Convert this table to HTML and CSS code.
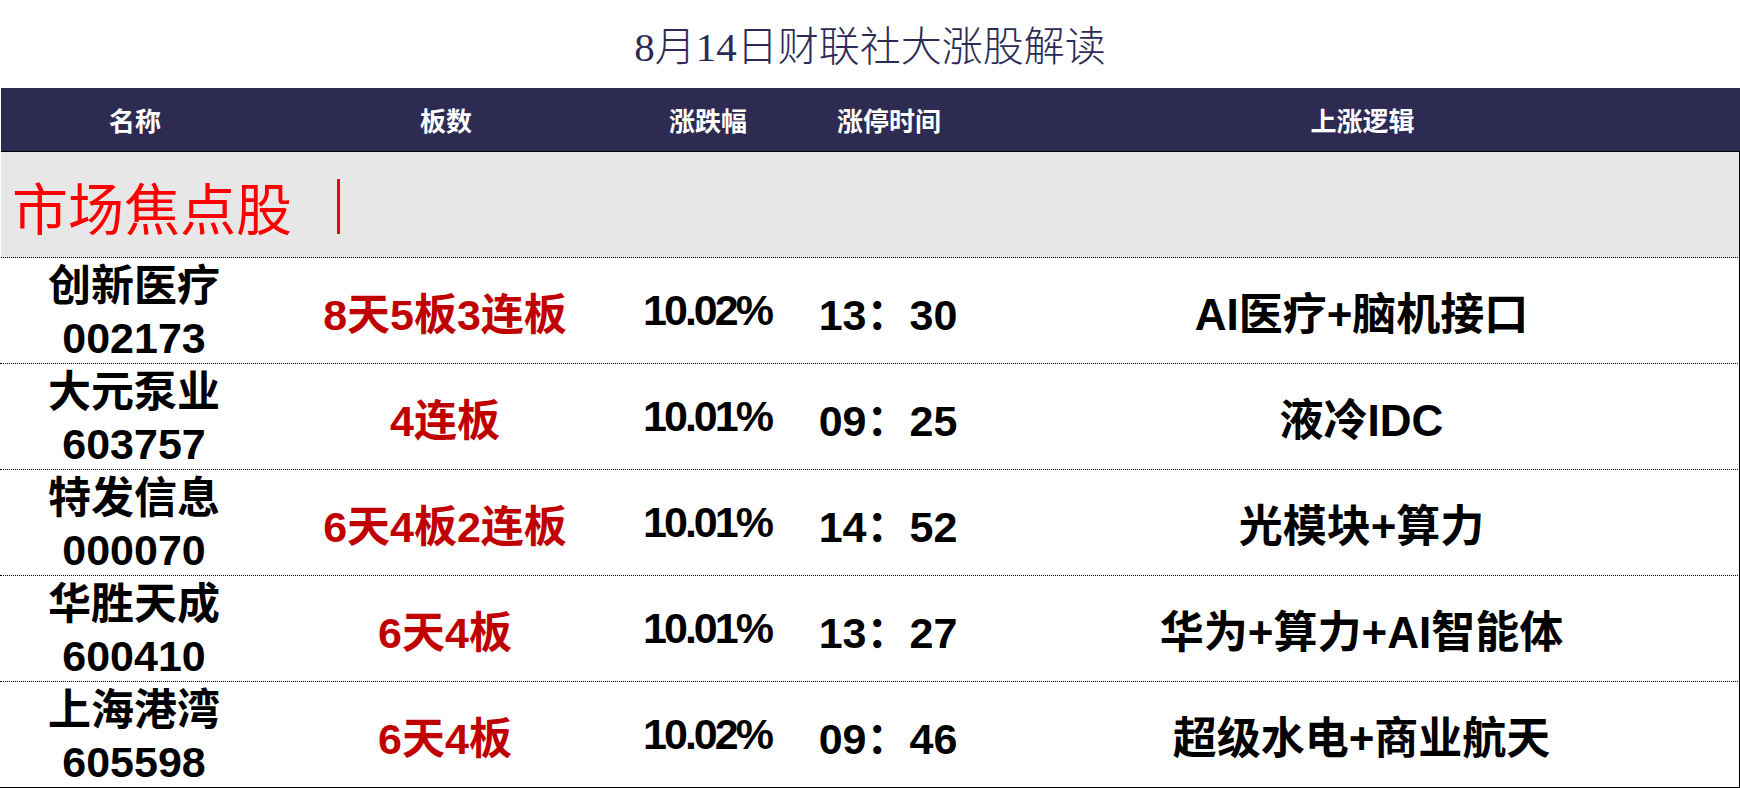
FILE: index.html
```html
<!DOCTYPE html>
<html lang="zh-CN">
<head>
<meta charset="utf-8">
<title>8月14日财联社大涨股解读</title>
<link rel="stylesheet" href="styles.css">
</head>
<body>
<div class="page">
  <h1 class="title">8月14日财联社大涨股解读</h1>
  <div class="table">
    <div class="head">
      <div class="c c1">名称</div>
      <div class="c c2">板数</div>
      <div class="c c3">涨跌幅</div>
      <div class="c c4">涨停时间</div>
      <div class="c c5">上涨逻辑</div>
    </div>
    <div class="section">
      <span class="section-text">市场焦点股</span><span class="section-bar"></span>
    </div>
    <div class="row">
      <div class="c c1 name"><span class="stock">创新医疗</span><span class="code">002173</span></div>
      <div class="c c2 board">8天5板3连板</div>
      <div class="c c3 pct">10.02%</div>
      <div class="c c4 time">13：30</div>
      <div class="c c5 logic">AI医疗+脑机接口</div>
    </div>
    <div class="row">
      <div class="c c1 name"><span class="stock">大元泵业</span><span class="code">603757</span></div>
      <div class="c c2 board">4连板</div>
      <div class="c c3 pct">10.01%</div>
      <div class="c c4 time">09：25</div>
      <div class="c c5 logic">液冷IDC</div>
    </div>
    <div class="row">
      <div class="c c1 name"><span class="stock">特发信息</span><span class="code">000070</span></div>
      <div class="c c2 board">6天4板2连板</div>
      <div class="c c3 pct">10.01%</div>
      <div class="c c4 time">14：52</div>
      <div class="c c5 logic">光模块+算力</div>
    </div>
    <div class="row">
      <div class="c c1 name"><span class="stock">华胜天成</span><span class="code">600410</span></div>
      <div class="c c2 board">6天4板</div>
      <div class="c c3 pct">10.01%</div>
      <div class="c c4 time">13：27</div>
      <div class="c c5 logic">华为+算力+AI智能体</div>
    </div>
    <div class="row last">
      <div class="c c1 name"><span class="stock">上海港湾</span><span class="code">605598</span></div>
      <div class="c c2 board">6天4板</div>
      <div class="c c3 pct">10.02%</div>
      <div class="c c4 time">09：46</div>
      <div class="c c5 logic">超级水电+商业航天</div>
    </div>
  </div>
</div>
</body>
</html>
```
FILE: styles.css
```css
html, body {
  margin: 0;
  padding: 0;
  background: #ffffff;
}
.page {
  width: 1740px;
  height: 788px;
  overflow: hidden;
  font-family: "Liberation Sans", "Noto Sans CJK SC", sans-serif;
}
.title {
  margin: 0;
  height: 88px;
  display: flex;
  align-items: center;
  justify-content: center;
  font-family: "Liberation Serif", "Noto Sans CJK SC", serif;
  font-weight: 300;
  font-size: 41px;
  color: #2d2b55;
  box-sizing: border-box;
  padding-bottom: 2px;
}
.table {
  display: flex;
  flex-direction: column;
}
.head, .row {
  display: grid;
  grid-template-columns: 268px 354px 170px 192px 1fr;
  align-items: center;
}
.head {
  height: 63px;
  background: #2d2b52;
  border-bottom: 1px solid #000;
  color: #ffffff;
  font-family: "Noto Sans CJK SC", sans-serif;
  font-weight: 700;
  font-size: 26px;
  margin-left: 1px;
}
.c {
  text-align: center;
  white-space: nowrap;
}
.section {
  height: 105px;
  background: #e7e7e7;
  border-bottom: 1px dotted #000;
  border-right: 1px solid #000;
  margin-left: 1px;
  display: flex;
  align-items: center;
  padding-left: 11px;
}
.section-text {
  font-family: "Noto Sans CJK SC", serif;
  font-weight: 400;
  font-size: 56px;
  color: #ff0000;
  line-height: 1;
  padding-top: 2px;
}
.section-bar {
  display: inline-block;
  width: 3px;
  height: 55px;
  background: #ff0000;
  margin-left: 45px;
  margin-top: 4px;
}
.row {
  height: 105px;
  border-bottom: 1px dotted #000;
  border-right: 1px solid #000;
  font-weight: 700;
  font-size: 43px;
  color: #000;
}
.row.last {
  border-bottom: 2px solid #000;
}
.name {
  align-self: stretch;
  display: flex;
  flex-direction: column;
  align-items: center;
  padding-top: 7px;
}
.stock {
  font-family: "Liberation Sans", "Noto Sans CJK SC", sans-serif;
  font-size: 43px;
  font-weight: 700;
  line-height: 43px;
}
.code {
  line-height: 43px;
  margin-top: 9px;
}
.board {
  color: #c00000;
}
.pct {
  letter-spacing: -3px;
}
.logic {
  font-size: 44px;
}
```
